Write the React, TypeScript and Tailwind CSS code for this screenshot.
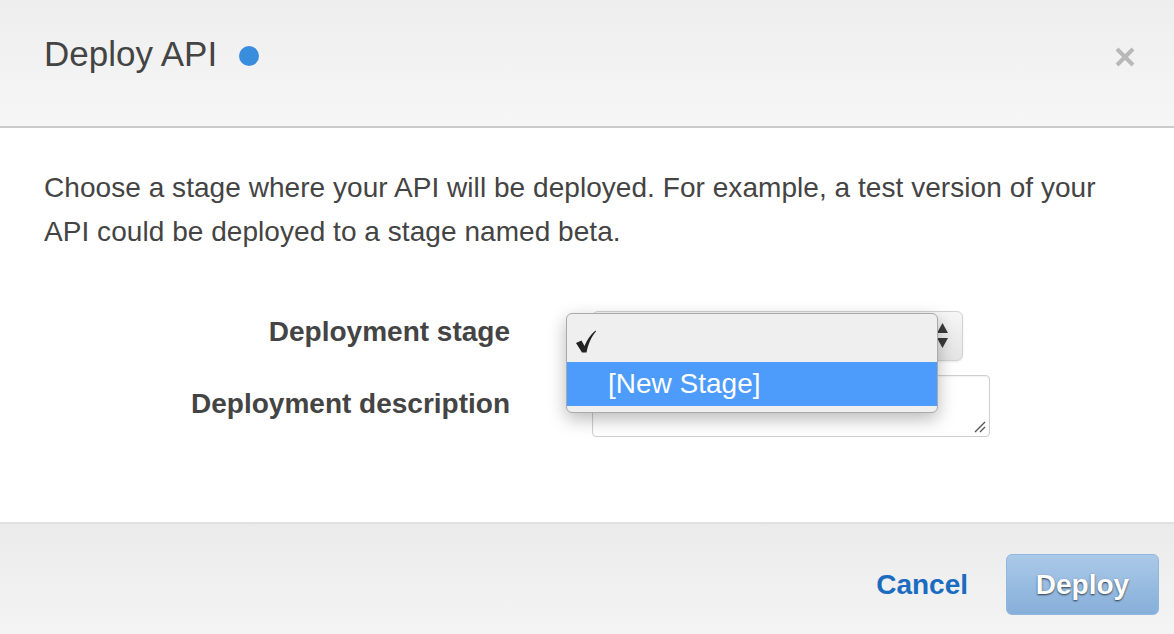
import React from 'react'

function CloseIcon() {
  return (
    <svg width="20" height="20" viewBox="0 0 20 20" className="block">
      <path d="M2 2 L18 18 M18 2 L2 18" stroke="#b8b8b8" strokeWidth="4" />
    </svg>
  )
}

function CheckMark() {
  return (
    <svg width="20" height="23" viewBox="0 0 20 23" className="block">
      <path d="M0 13 L5.5 10.5 L8.5 16 C11 10 14.5 4.5 19.5 0.5 L20 1.5 C16 6 12.5 12.5 10.5 22.5 L6 22.5 Z" fill="#222" />
    </svg>
  )
}

function SelectArrows() {
  return (
    <svg width="11" height="26" viewBox="0 0 11 26" className="block">
      <path d="M5.5 0 L11 10 L0 10 Z" fill="#3a3a3a" />
      <path d="M0 15 L11 15 L5.5 25 Z" fill="#3a3a3a" />
    </svg>
  )
}

function ResizeGrip() {
  return (
    <svg width="12" height="12" viewBox="0 0 12 12" className="block">
      <path d="M1 11 L11 1 M6 11 L11 6" stroke="#555" strokeWidth="1.4" />
    </svg>
  )
}

export default function App() {
  return (
    <div className="flex h-[634px] w-[1174px] flex-col overflow-hidden font-['Liberation_Sans',Arial,sans-serif] text-[#444]">
      {/* header */}
      <div className="flex h-[128px] shrink-0 items-start border-b-2 border-[#cccccc] bg-gradient-to-b from-[#eeeeee] to-[#f6f6f6] pl-[44px] pr-[39px] pt-[36px]">
        <h1 className="text-[35px] leading-[35px] font-normal">Deploy API</h1>
        <span className="ml-[22px] mt-[10px] h-[20px] w-[20px] rounded-full bg-[#3a8ddd]" />
        <button className="ml-auto mt-[11px]" aria-label="Close">
          <CloseIcon />
        </button>
      </div>

      {/* body */}
      <div className="flex-1 bg-white px-[44px] pt-[38px]">
        <p className="whitespace-nowrap text-[28px] leading-[44px] tracking-[0.05px]">
          Choose a stage where your API will be deployed. For example, a test version of your
          <br />
          API could be deployed to a stage named beta.
        </p>

        <div className="mt-[57px] flex flex-col gap-[14px]">
          <div className="flex items-start">
            <label className="mt-[5px] w-[466px] text-right text-[28px] leading-[32px] font-bold">Deployment stage</label>
            <div className="relative ml-[82px]">
              <div className="flex h-[50px] w-[371px] items-center justify-end rounded-[6px] border border-[#d2d2d2] bg-gradient-to-b from-[#f6f6f6] to-[#e4e4e4] pr-[14px] shadow-[0_1px_2px_rgba(0,0,0,0.08)]">
                <SelectArrows />
              </div>
              <div className="absolute left-[-26px] top-[2px] z-10 w-[372px] rounded-[6px] border border-[#aaaaaa] bg-[#efefef] pb-[6px] shadow-[0_6px_18px_rgba(0,0,0,0.28)]">
                <div className="flex h-[48px] items-center pl-[9px] pt-[6px]">
                  <CheckMark />
                </div>
                <div className="flex h-[44px] items-center bg-[#4d9cfb] pl-[41px] text-[28px] leading-[32px] text-white">
                  [New Stage]
                </div>
              </div>
            </div>
          </div>
          <div className="flex items-start">
            <label className="mt-[13px] w-[466px] text-right text-[28px] leading-[32px] font-bold">Deployment description</label>
            <div className="relative ml-[82px] h-[62px] w-[398px] rounded-[4px] border border-[#cfcfcf] bg-white shadow-[inset_0_1px_2px_rgba(0,0,0,0.06)]">
              <div className="absolute bottom-[3px] right-[3px]">
                <ResizeGrip />
              </div>
            </div>
          </div>
        </div>
      </div>

      {/* footer */}
      <div className="flex h-[112px] shrink-0 items-start justify-end gap-[38px] border-t-2 border-[#e0e0e0] bg-gradient-to-b from-[#ebebeb] to-[#f4f4f4] pr-[15px] pt-[30px]">
        <button className="mt-[15px] text-[28px] leading-[32px] font-bold text-[#1b6cc1]">Cancel</button>
        <button className="h-[61px] w-[153px] rounded-[6px] border border-[#90b7de] bg-gradient-to-b from-[#abc9e8] to-[#86afd9] text-[28px] leading-[32px] font-bold text-white [text-shadow:0_1px_2px_rgba(0,0,0,0.7)]">
          Deploy
        </button>
      </div>
    </div>
  )
}
